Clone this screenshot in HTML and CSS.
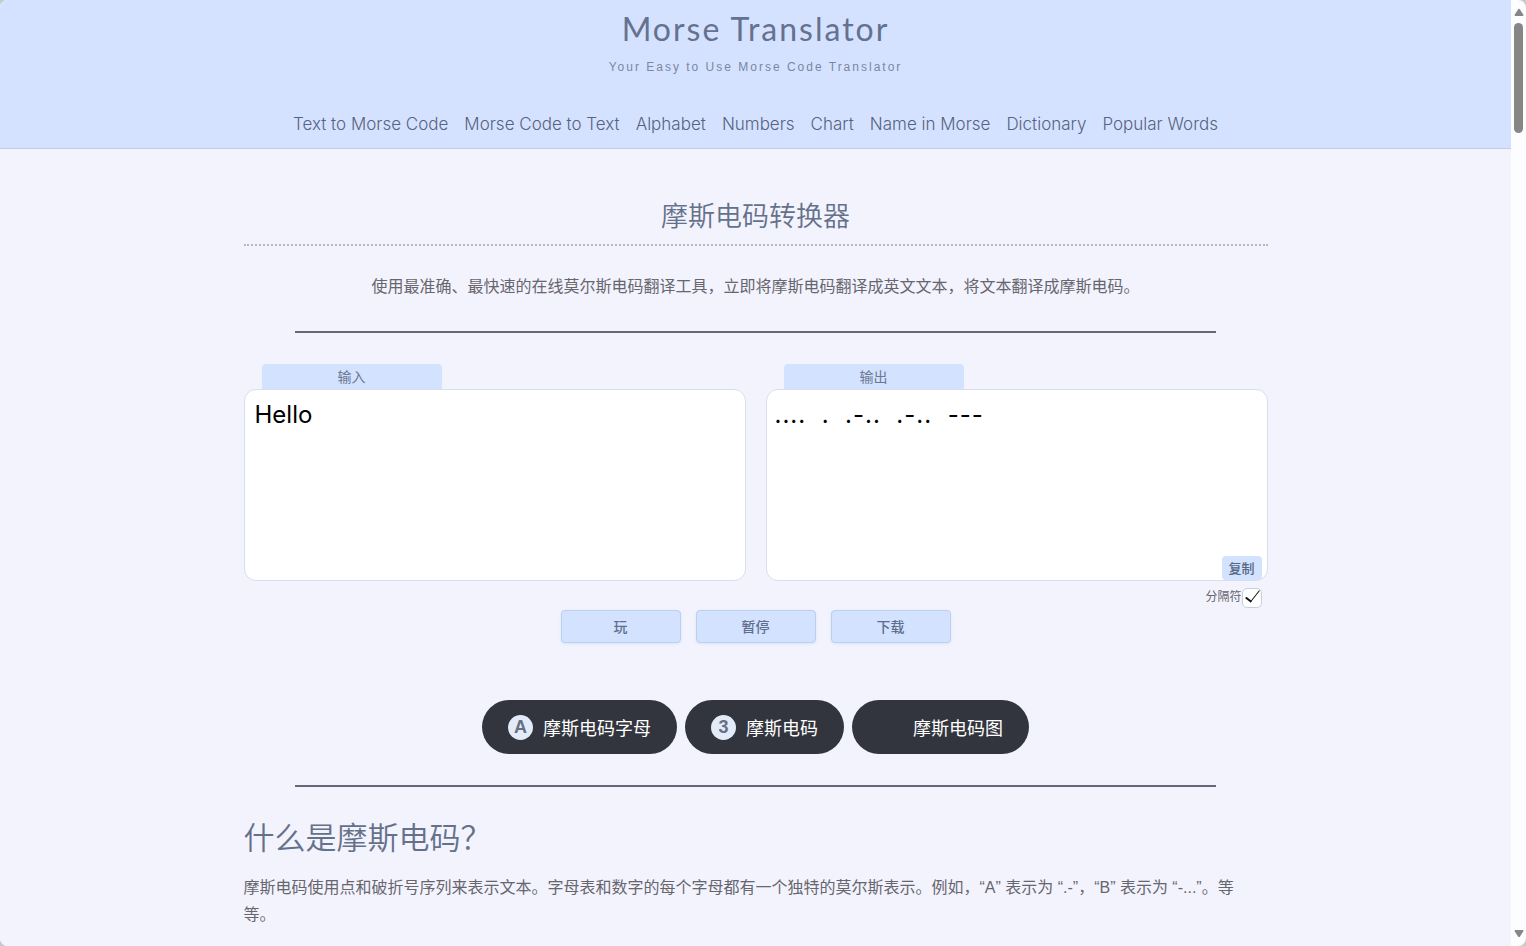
FILE: index.html
```html
<!DOCTYPE html>
<html lang="zh-CN">
<head>
    <meta charset="UTF-8" />
    <meta name="viewport" content="width=device-width, initial-scale=1.0" />
    <title>Morse Translator</title>
    <link rel="stylesheet" href="styles.css">
</head>
<body>
    <div class="window">
        <div class="page">
            <header class="site-header">
                <h1 class="site-title">Morse Translator</h1>
                <p class="tagline">Your Easy to Use Morse Code Translator</p>
                <nav class="site-nav">
                    <a href="#">Text to Morse Code</a>
                    <a href="#">Morse Code to Text</a>
                    <a href="#">Alphabet</a>
                    <a href="#">Numbers</a>
                    <a href="#">Chart</a>
                    <a href="#">Name in Morse</a>
                    <a href="#">Dictionary</a>
                    <a href="#">Popular Words</a>
                </nav>
            </header>

            <main class="content">
                <h2 class="page-title">摩斯电码转换器</h2>
                <p class="intro">使用最准确、最快速的在线莫尔斯电码翻译工具，立即将摩斯电码翻译成英文文本，将文本翻译成摩斯电码。</p>
                <hr>

                <div class="translator">
                    <div class="panel">
                        <label class="tab" for="input">输入</label>
                        <textarea id="input">Hello</textarea>
                    </div>
                    <div class="panel">
                        <label class="tab" for="output">输出</label>
                        <textarea id="output" class="morse" readonly>....  .  .-..  .-..  ---</textarea>
                        <button class="copy" type="button">复制</button>
                        <div class="separator">
                            <label for="separator">分隔符</label>
                            <input type="checkbox" id="separator" checked>
                        </div>
                    </div>
                </div>

                <div class="controls">
                    <button type="button">玩</button>
                    <button type="button">暂停</button>
                    <button type="button">下载</button>
                </div>

                <div class="pills">
                    <a class="pill" href="#"><span class="badge">A</span>摩斯电码字母</a>
                    <a class="pill" href="#"><span class="badge">3</span>摩斯电码</a>
                    <a class="pill" href="#"><span class="badge empty"></span>摩斯电码图</a>
                </div>
                <hr>

                <h2 class="section-title">什么是摩斯电码？</h2>
                <p class="text">摩斯电码使用点和破折号序列来表示文本。字母表和数字的每个字母都有一个独特的莫尔斯表示。例如，“A” 表示为 “.-”，“B” 表示为 “-...”。等等。</p>
            </main>
        </div>

        <div class="scrollbar">
            <svg width="10" height="8" viewBox="0 0 10 8"><path d="M4 1.5 Q5 0 6 1.5 L9.5 7 Q9.5 8 8.5 8 H1.5 Q.5 8 .5 7 Z"/></svg>
            <div class="thumb"></div>
            <svg class="down" width="10" height="8" viewBox="0 0 10 8"><path d="M4 6.5 Q5 8 6 6.5 L9.5 1 Q9.5 0 8.5 0 H1.5 Q.5 0 .5 1 Z"/></svg>
        </div>
    </div>
</body>
</html>
```

FILE: styles.css
```css
* {
    box-sizing: border-box;
}

body {
    margin: 0;
    background: #c3cdd0;
    font-family: "Liberation Sans", "Noto Sans CJK SC", sans-serif;
    font-size: 16px;
    color: #67666e;
}

.window {
    display: flex;
    height: 100vh;
    overflow: hidden;
    border-radius: 8px;
    background: #fcfdfe;
}

.page {
    flex: 1;
    overflow: hidden;
    background: #f3f3fe;
}

/* Header */
.site-header {
    padding-top: 9px;
    text-align: center;
    background: #d5e2ff;
    border-bottom: 1px solid #bfd0e6;
}

.site-title {
    margin: 0;
    font-family: Lato, sans-serif;
    font-size: 32px;
    font-weight: 400;
    line-height: 40px;
    letter-spacing: 2px;
    color: #64718f;
}

.tagline {
    margin: 9px 0 0;
    font-size: 12px;
    line-height: 18px;
    letter-spacing: 2px;
    color: #7b879f;
}

.site-nav {
    display: flex;
    flex-wrap: wrap;
    justify-content: center;
    gap: 16px;
    padding: 36px 0 12px;
    line-height: 24px;
}

.site-nav a {
    font-family: Inter, sans-serif;
    font-size: 17px;
    font-weight: 300;
    color: #56637f;
    text-decoration: none;
}

/* Content */
.content {
    width: 100%;
    max-width: 1024px;
    margin: 0 auto;
}

.page-title {
    margin: 48px 0 0;
    padding-bottom: 6px;
    border-bottom: 2px dotted #b5b6bf;
    font-size: 27px;
    font-weight: 350;
    line-height: 41px;
    text-align: center;
    color: #64718a;
}

.intro {
    margin: 27px 0 31px;
    line-height: 27px;
    text-align: center;
}

hr {
    width: 90%;
    height: 2px;
    margin: 0 auto;
    border: 0;
    background: #67677a;
}

.translator {
    display: grid;
    grid-template-columns: 1fr 1fr;
    gap: 20px;
    margin-top: 31px;
}

.panel {
    position: relative;
}

.tab {
    display: block;
    width: 180px;
    height: 25px;
    margin-left: 18px;
    border-radius: 4px 4px 0 0;
    background: #d3e2ff;
    font-size: 14px;
    line-height: 27px;
    text-align: center;
    color: #6b7894;
}

textarea {
    display: block;
    width: 100%;
    height: 192px;
    padding: 10px;
    border: 1px solid #dadded;
    border-radius: 12px;
    background: #fff;
    font-family: Inter, sans-serif;
    font-size: 24px;
    line-height: 30px;
    color: #000;
    resize: none;
    outline: none;
}

.morse {
    padding-left: 8px;
    letter-spacing: 1px;
}

.copy {
    position: absolute;
    top: 192px;
    right: 6px;
    width: 40px;
    height: 24px;
    padding: 0 0 2px;
    border: 0;
    border-radius: 4px;
    background: #d3e2ff;
    font-family: inherit;
    font-size: 13px;
    font-weight: 500;
    color: #566582;
}

.separator {
    display: flex;
    justify-content: flex-end;
    height: 20px;
    margin: 7px 6px 0 0;
    font-size: 12px;
    line-height: 18px;
}

.separator input {
    appearance: none;
    width: 20px;
    height: 20px;
    margin: 0;
    border: 1px solid #c5d0dc;
    border-radius: 5px;
    background: #fff;
}

.separator input:checked::before {
    content: "";
    display: block;
    width: 6px;
    height: 13px;
    margin: -2px 0 0 6px;
    border: solid #111;
    border-width: 0 1px 2px 0;
    transform: rotate(38deg);
}

.controls {
    display: flex;
    justify-content: center;
    gap: 15px;
    margin-top: 2px;
}

.controls button {
    width: 120px;
    height: 33px;
    padding: 0 0 2px;
    border: 1px solid #bccfec;
    border-radius: 4px;
    background: #d3e2ff;
    box-shadow: 0 1px 3px #d3e4f8;
    font-family: inherit;
    font-size: 14px;
    font-weight: 500;
    color: #5f6f8b;
}

.pills {
    display: flex;
    flex-wrap: wrap;
    justify-content: center;
    gap: 8px;
    margin: 57px 0 31px;
}

.pill {
    display: flex;
    align-items: center;
    gap: 10px;
    height: 54px;
    padding: 0 26px;
    border-radius: 27px;
    background: #32353d;
    font-size: 18px;
    color: #fff;
    text-decoration: none;
}

.badge {
    width: 25px;
    height: 25px;
    border-radius: 50%;
    background: #e3ebf8;
    font-size: 18px;
    font-weight: 700;
    line-height: 25px;
    text-align: center;
    color: #667085;
}

.badge.empty {
    visibility: hidden;
}

.section-title {
    margin: 27px 0 0;
    font-size: 31px;
    font-weight: 350;
    line-height: 50px;
    color: #64718a;
}

.text {
    margin: 10px 0 0;
    padding-right: 16px;
    line-height: 27px;
}

/* Scrollbar */
.scrollbar {
    display: flex;
    flex-direction: column;
    align-items: center;
    width: 15px;
    padding: 8px 0;
    fill: #868785;
}

.thumb {
    width: 9px;
    height: 110px;
    margin-top: 7px;
    border-radius: 5px;
    background: #868785;
}

.scrollbar .down {
    margin-top: auto;
}
```
